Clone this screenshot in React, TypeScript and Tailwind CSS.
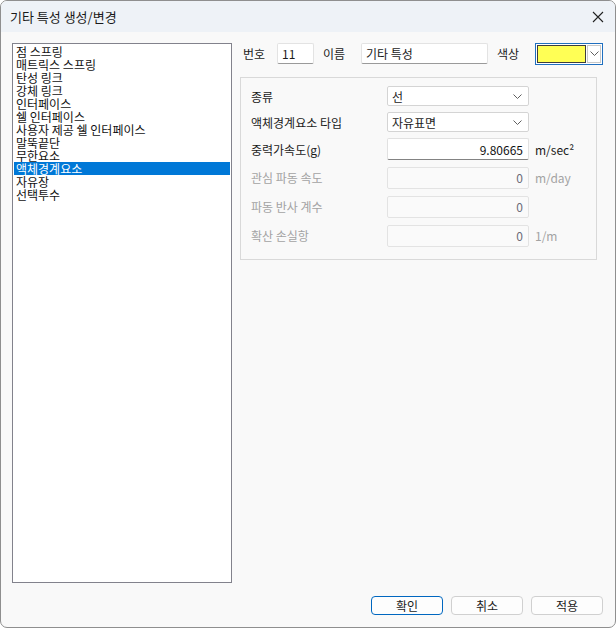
import React from "react"

const font = { fontFamily: '"Noto Sans CJK KR", "Noto Sans", sans-serif' }

const items = [
  "점 스프링",
  "매트릭스 스프링",
  "탄성 링크",
  "강체 링크",
  "인터페이스",
  "쉘 인터페이스",
  "사용자 제공 쉘 인터페이스",
  "말뚝끝단",
  "무한요소",
  "액체경계요소",
  "자유장",
  "선택투수",
]

function Chevron({ className = "" }: { className?: string }) {
  return (
    <svg width="9" height="5" viewBox="0 0 9 5" className={className}>
      <path d="M0.5 0.5 L4.5 4.5 L8.5 0.5" fill="none" stroke="#5f5f5f" strokeWidth="1" />
    </svg>
  )
}

function Select({ value }: { value: string }) {
  return (
    <div className="flex h-[20px] w-[142px] items-center justify-between rounded-[2px] border border-[#d4d4d4] bg-white pl-[4px] pr-[6px] text-[#1b1b1b]">
      <span>{value}</span>
      <Chevron />
    </div>
  )
}

function NumInput({ value, disabled }: { value: string; disabled?: boolean }) {
  return disabled ? (
    <div className="flex h-[22px] w-[142px] items-center justify-end rounded-[2px] border border-[#e3e3e3] bg-[#fafafa] pr-[5px] text-[#6b6b78]">
      {value}
    </div>
  ) : (
    <div className="flex h-[22px] w-[142px] items-center justify-end rounded-[2px] border border-[#e1e1e1] border-b-[#838383] bg-white pr-[5px] text-[#111]">
      {value}
    </div>
  )
}

function Row({ label, h, disabled, unit, children }: { label: string; h: string; disabled?: boolean; unit?: string; children: React.ReactNode }) {
  return (
    <div className={`flex items-center ${h}`}>
      <div className={`w-[136px] ${disabled ? "text-[#a3a3a3]" : "text-[#1b1b1b]"}`}>{label}</div>
      {children}
      {unit && <div className={`ml-[6px] ${disabled ? "text-[#a3a3a3]" : "text-[#1b1b1b]"}`}>{unit}</div>}
    </div>
  )
}

export default function App() {
  return (
    <div className="h-[628px] w-[616px] bg-white" style={font}>
      <div className="flex h-[628px] w-[616px] flex-col overflow-hidden rounded-[7px] border border-[#8f8f8f] bg-[#f9f9f9] text-[12px] leading-[13px]">
        {/* title bar */}
        <div className="flex h-[31px] shrink-0 items-center justify-between bg-[#eef2f7] pl-[9px] pr-[11px]">
          <span className="text-[13px] text-[#1a1a1a]">기타 특성 생성/변경</span>
          <svg width="12" height="12" viewBox="0 0 12 12">
            <path d="M1 1 L11 11 M11 1 L1 11" stroke="#222" strokeWidth="1.1" />
          </svg>
        </div>

        {/* body */}
        <div className="flex flex-1 pl-[11px] pt-[11px]">
          <div className="h-[540px] w-[220px] border border-[#82828c] bg-white p-[1px]">
            {items.map((it) => (
              <div
                key={it}
                className={`h-[13px] whitespace-nowrap pl-[2px] leading-[13px] ${it === "액체경계요소" ? "bg-[#0078d7] text-white" : "text-[#111]"}`}
              >
                {it}
              </div>
            ))}
          </div>

          <div className="ml-[8px] flex w-[357px] flex-col">
            {/* top row */}
            <div className="flex h-[21px] items-center text-[#1b1b1b] [&>*]:shrink-0">
              <span className="ml-[3px] w-[34px]">번호</span>
              <div className="flex h-[21px] w-[37px] items-center rounded-[2px] border border-[#e3e3e3] border-b-[#9a9a9a] bg-white pl-[4px]">11</div>
              <span className="ml-[9px] w-[38px]">이름</span>
              <div className="flex h-[21px] w-[127px] items-center rounded-[2px] border border-[#e3e3e3] border-b-[#9a9a9a] bg-white pl-[4px]">기타 특성</div>
              <span className="ml-[9px] w-[38px]">색상</span>
              <div className="flex h-[22px] w-[68px] items-center border border-[#1f6fbf] bg-white p-[1px]">
                <div className="h-full flex-1 border border-[#3d3d3d] bg-[#ffff55]" />
                <div className="ml-[1px] flex h-full w-[14px] items-center justify-center border border-[#c8c8c8] bg-white">
                  <Chevron />
                </div>
              </div>
            </div>

            {/* group */}
            <div className="mt-[13px] flex h-[183px] flex-col border border-[#d9d9d9] bg-[#f9f9f9] pl-[10px] pt-[5px]">
              <Row label="종류" h="h-[26px]">
                <Select value="선" />
              </Row>
              <Row label="액체경계요소 타입" h="h-[26px]">
                <Select value="자유표면" />
              </Row>
              <Row label="중력가속도(g)" h="h-[28px]" unit="m/sec²">
                <NumInput value="9.80665" />
              </Row>
              <Row label="관심 파동 속도" h="h-[29px]" unit="m/day" disabled>
                <NumInput value="0" disabled />
              </Row>
              <Row label="파동 반사 계수" h="h-[29px]" disabled>
                <NumInput value="0" disabled />
              </Row>
              <Row label="확산 손실항" h="h-[29px]" unit="1/m" disabled>
                <NumInput value="0" disabled />
              </Row>
            </div>
          </div>
        </div>

        {/* buttons */}
        <div className="flex h-[44px] shrink-0 items-start justify-end gap-[8px] pr-[12px] pt-[13px] text-[#1b1b1b]">
          <button className="h-[19px] w-[72px] rounded-[4px] border border-[#0067c0] bg-[#fdfdfd]">확인</button>
          <button className="h-[19px] w-[72px] rounded-[4px] border border-[#d0d0d0] bg-[#fdfdfd]">취소</button>
          <button className="h-[19px] w-[72px] rounded-[4px] border border-[#d0d0d0] bg-[#fdfdfd]">적용</button>
        </div>
      </div>
    </div>
  )
}
